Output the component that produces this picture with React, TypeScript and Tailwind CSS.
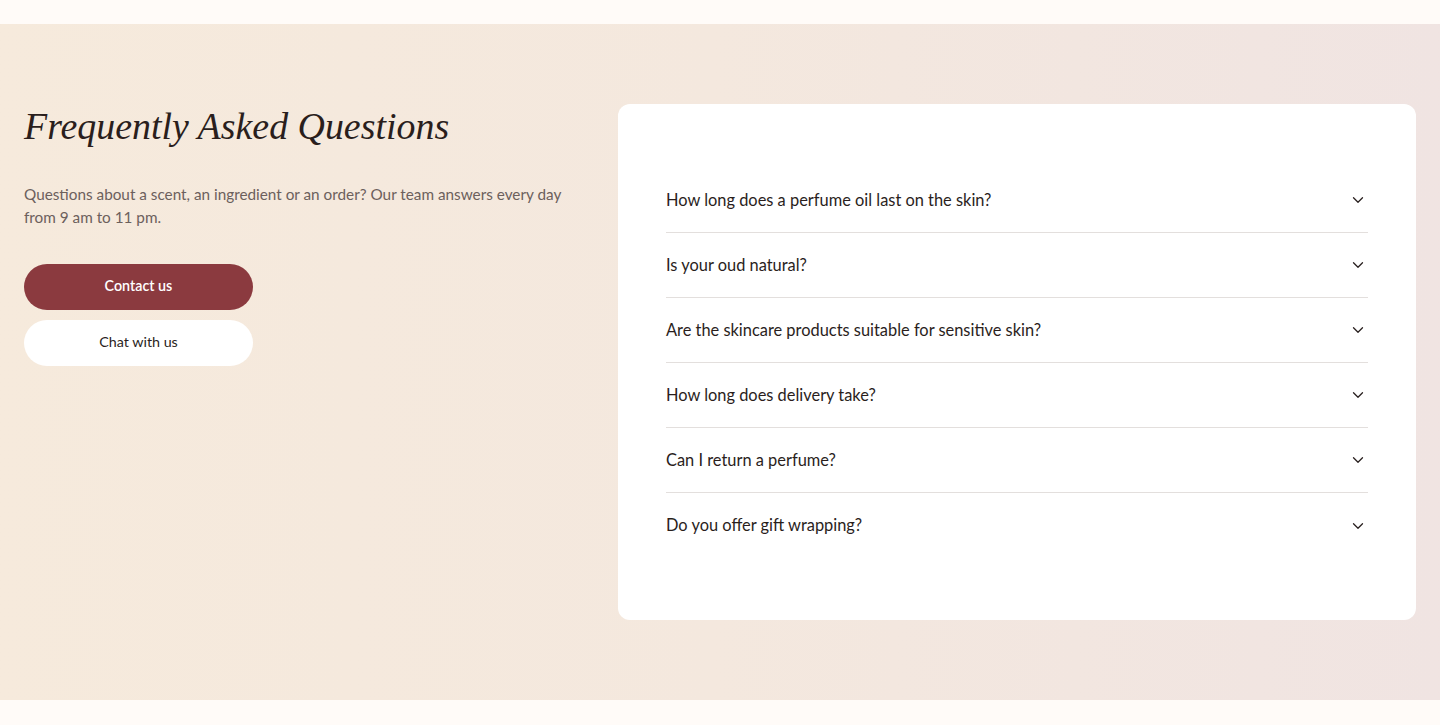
import React from "react";

const questions = [
  "How long does a perfume oil last on the skin?",
  "Is your oud natural?",
  "Are the skincare products suitable for sensitive skin?",
  "How long does delivery take?",
  "Can I return a perfume?",
  "Do you offer gift wrapping?",
];

function Chevron() {
  return (
    <svg width="18" height="18" viewBox="0 0 24 24" fill="none" stroke="#2a2120" strokeWidth="1.7" strokeLinecap="round" strokeLinejoin="round">
      <path d="m6 9 6 6 6-6" />
    </svg>
  );
}

export default function App() {
  return (
    <div className="min-h-[725px] bg-[#fffbf8]" style={{ fontFamily: "Lato, 'Open Sans', sans-serif" }}>
      <div className="h-6" />
      <section className="bg-gradient-to-r from-[#f6eadc] via-[#f4e8de] to-[#f0e4e2] px-6 pt-20 pb-20">
        <div className="grid grid-cols-[546px_1fr] gap-12">
          <div>
            <h2
              className="text-[37.9px] leading-[45px] italic text-[#2a1e1c]"
              style={{ fontFamily: "'Liberation Serif', 'DejaVu Serif', serif" }}
            >
              Frequently Asked Questions
            </h2>
            <p className="mt-[34px] text-[15.3px] leading-[23px] text-[#6c605c]">
              Questions about a scent, an ingredient or an order? Our team answers every day from 9 am to 11 pm.
            </p>
            <div className="mt-[35px] flex w-[229px] flex-col gap-[10px]">
              <button className="h-[46px] rounded-full bg-[#8b3a3f] pb-[3px] text-[14.3px] font-semibold text-white">
                Contact us
              </button>
              <button className="h-[46px] rounded-full bg-white pb-[3px] text-[14.3px] text-[#2a1e1c]">
                Chat with us
              </button>
            </div>
          </div>
          <div className="rounded-xl bg-white px-12 pt-[64px] pb-[62px]">
            {questions.map((q, i) => (
              <div
                key={q}
                className={`flex h-[65px] items-center justify-between ${i < questions.length - 1 ? "border-b border-[#e3dfdd]" : ""}`}
              >
                <span className="text-[16.4px] text-[#2a1e1c]">{q}</span>
                <span className="mr-[1px]"><Chevron /></span>
              </div>
            ))}
          </div>
        </div>
      </section>
    </div>
  );
}
